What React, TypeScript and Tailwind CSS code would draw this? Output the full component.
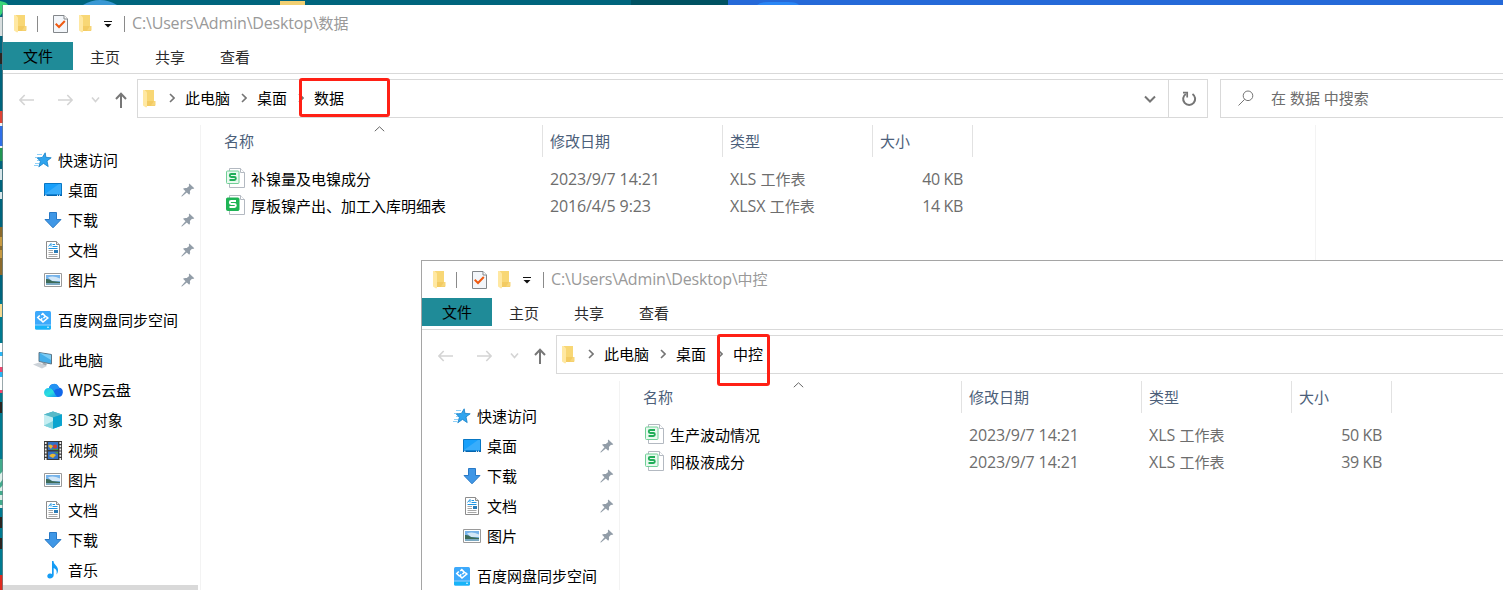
import React from "react";

type NavItem = {
  label: string;
  latin?: string;
  icon: React.ReactNode;
  child?: boolean;
  pinned?: boolean;
  gapBefore?: boolean;
};

type FileItem = {
  name: string;
  date: string;
  type: string;
  size: string;
  filled?: boolean;
};

function FolderIcon() {
  return (
    <svg width="13" height="18" viewBox="0 0 13 18" className="shrink-0">
      <path d="M2 0H11V12H12V16H3Z" fill="#f3cb62" />
      <path d="M3 0H11V11H3Z" fill="#f8d775" />
      <path d="M0 0H2L4 2.5V17L3 17.5L0 15.5Z" fill="#ffe8a2" />
      <path d="M11 11h1.5V15.5H8Z" fill="#f7d679" />
    </svg>
  );
}

function CheckDocIcon() {
  return (
    <svg width="15" height="18" viewBox="0 0 15 18" className="shrink-0">
      <path d="M.5.5H11L14.5 4V17.5H.5Z" fill="#f3f6fa" stroke="#83878b" />
      <path d="M11 .5V4H14.5" fill="#fff" stroke="#83878b" />
      <path d="M2.7 8.8 6 12 11.8 6" fill="none" stroke="#ef5a12" strokeWidth="2" />
    </svg>
  );
}

function StarIcon() {
  return (
    <svg width="18" height="16" viewBox="0 0 18 16" className="shrink-0">
      <path d="M3 2.5H8M1 5.5H5M3 8.5H6M1 11.5H5M0 13.5H4" stroke="#8fd0f7" />
      <path
        d="M11.2.8 11.9 5.3 17.2 5.8 13 8.9 14.2 14.6 9.5 11.4 4.8 14.8 6.4 9.2 3.3 6 8.4 5.4Z"
        fill="#2fa4ee"
        stroke="#1480c8"
        strokeWidth=".8"
      />
    </svg>
  );
}

function DesktopIcon() {
  return (
    <svg width="18" height="14" viewBox="0 0 18 14" className="shrink-0">
      <path d="M.5.5H17.5V12.5H.5Z" fill="#18a0fb" stroke="#0877c4" />
      <path d="M1 11 15 1H17V11Z" fill="#39adfb" />
      <path d="M0 11.5H18V13H0Z" fill="#0664ad" />
      <path d="M1 12.3H2.5M13 12.3h1M15 12.3h1" stroke="#fff" />
    </svg>
  );
}

function DownloadIcon() {
  return (
    <svg width="18" height="18" viewBox="0 0 18 18" className="shrink-0">
      <path d="M5.5 1.5H12.5V8.5H17L9 16.8 1 8.5H5.5Z" fill="#3f97e6" stroke="#2879c6" />
    </svg>
  );
}

function DocumentIcon() {
  return (
    <svg width="18" height="18" viewBox="0 0 18 18" className="shrink-0">
      <path d="M2.5.5H12.5L15.5 3.5V17.5H2.5Z" fill="#fff" stroke="#8c8c8c" />
      <path d="M12.5.5V3.5H15.5" fill="#e8e8e8" stroke="#8c8c8c" />
      <path d="M4.5 5.5 7 2.5V5.5M8.5 3.5H11M8.5 5.5H13.5M4.5 7.5H13.5" stroke="#2196e3" fill="none" />
      <path d="M4.5 9.5H9M4.5 11.5H9M4.5 13.5H13.5M4.5 15.5H13.5" stroke="#a8a8a8" />
      <path d="M10 9H14V12H10Z" fill="#2b7cb8" />
    </svg>
  );
}

function PictureIcon() {
  return (
    <svg width="18" height="14" viewBox="0 0 18 14" className="shrink-0">
      <path d="M.5.5H17.5V13.5H.5Z" fill="#fff" stroke="#9a9a9a" />
      <path d="M2 2H16V12H2Z" fill="#76b3ea" />
      <path d="M4 4.5Q9 2 16 5.5V8H8Z" fill="#d2e7f8" />
      <path d="M2 6Q5 5.5 8 8L16 9V10H2Z" fill="#3d6b58" />
      <path d="M2 10H16V12H2Z" fill="#7ba9c2" />
    </svg>
  );
}

function BaiduIcon() {
  return (
    <svg width="16" height="19" viewBox="0 0 16 19" className="shrink-0">
      <rect width="16" height="18.5" rx="1.5" fill="#3da9fb" />
      <path d="M0 14.5H16V17a1.5 1.5 0 0 1-1.5 1.5H1.5A1.5 1.5 0 0 1 0 17Z" fill="#18b4f8" />
      <path d="M0 14H16" stroke="#a7ddff" strokeWidth=".8" />
      <path
        d="M4.8 4.5 2.8 6.5 5.3 9M6.3 4 7.8 2.7 10.3 5.2 8.4 7.2M11.2 5.5 12.8 7 8 11 5.8 8.9 7.3 7.2"
        fill="none"
        stroke="#fff"
        strokeWidth="1.6"
      />
      <circle cx="13" cy="16.3" r=".8" fill="#fff" />
    </svg>
  );
}

function ComputerIcon() {
  return (
    <svg width="20" height="18" viewBox="0 0 20 18" className="shrink-0">
      <path d="M6 1.5 18.5 3.5V13L6 10.5Z" fill="#44aeea" stroke="#5e7686" />
      <path d="M6.5 2 18 4V9Z" fill="#7cccf5" />
      <path d="M10 11.5 14 12.5 13 15 9 14Z" fill="#9fa7ad" />
      <path d="M0 13.5 6 11.5 14 15 9 17.5Z" fill="#ccd2d8" />
    </svg>
  );
}

function CloudIcon() {
  return (
    <svg width="19" height="14" viewBox="0 0 19 14" className="shrink-0">
      <defs>
        <linearGradient id="cloudFront" x1="0" y1="0" x2="1" y2="1">
          <stop offset="0" stopColor="#1fbdf0" />
          <stop offset=".5" stopColor="#2be0dc" />
          <stop offset="1" stopColor="#1389f5" />
        </linearGradient>
      </defs>
      <path d="M5 5A5.2 5.2 0 0 1 15 4.5 4.8 4.8 0 0 1 14 14H7Z" fill="#1268ea" />
      <path d="M5 5A5.2 5.2 0 0 1 13 1.6Q15 4 15 6 12 5 10 8 8.5 5 5 5Z" fill="#2393f3" />
      <path d="M4.5 14A4.5 4.5 0 0 1 4.6 5C8 4.8 9 7 10 9S12 13.5 14 14Z" fill="url(#cloudFront)" />
    </svg>
  );
}

function CubeIcon() {
  return (
    <svg width="18" height="18" viewBox="0 0 18 18" className="shrink-0">
      <path d="M0 3.5 9 .5 18 3.5V14.5L9 17.8 0 14.5Z" fill="#25a9c4" />
      <path d="M0 3.5 9 .5 18 3.5 9 6.5Z" fill="#57b9c8" />
      <path d="M0 3.5 9 6.5V17.8L0 14.5Z" fill="#c5eef2" />
      <path d="M0 14.5 9 10V17.8Z" fill="#7ed2db" />
      <path d="M9 6.5 18 3.5V14.5L9 17.8Z" fill="#0ba4cf" />
    </svg>
  );
}

function VideoIcon() {
  return (
    <svg width="18" height="19" viewBox="0 0 18 19" className="shrink-0">
      <path d="M0 0H18V19H0Z" fill="#3a3a3a" />
      <path d="M1.7 1V19M16.3 1V19" stroke="#f0f0f0" strokeWidth="1.7" strokeDasharray="2 1.2" />
      <path d="M4 1H14V9H4ZM4 10.5H14V18H4Z" fill="#3271c8" />
      <path d="M4 5Q6 2 9 5L7 8ZM5 15Q8 11 12 14L9 17Z" fill="#e7b934" />
      <circle cx="11" cy="5.5" r="2" fill="#d33f2c" />
      <path d="M8 8H14V9H8ZM10 11H14V13Z" fill="#4a9b43" />
    </svg>
  );
}

function MusicIcon() {
  return (
    <svg width="18" height="18" viewBox="0 0 18 18" className="shrink-0">
      <path
        d="M8 0H9.5C9.5 4 14.5 5 14 9.5 14 11 13.3 12.5 12.5 13.5 13.3 9.5 12 8 9.7 7V14C9.7 16 8 17.5 5.8 17.5 2.5 17.5 2.5 13 5.8 12.6Q7 12.3 8 13Z"
        fill="#149cf5"
      />
    </svg>
  );
}

function PinIcon() {
  return (
    <svg width="14" height="14" viewBox="0 0 14 14" className="shrink-0">
      <path
        d="M8.3.5 13.3 5.3 12 6 11 5.8 8.9 8.1C9.4 9.8 9 10.8 8.2 11.7L5.8 9.4 1 13.5.2 13.3 4.5 8.2 2 5.8C3 5 4.2 4.8 5.8 5.1L8.2 3 7.8 1.8Z"
        fill="#929da8"
      />
    </svg>
  );
}

function SheetIcon({ filled }: { filled?: boolean }) {
  return (
    <svg width="19" height="20" viewBox="0 0 19 20" className="shrink-0">
      <path d="M3.5.5H14.5L18.5 4.5V19.5H3.5Z" fill="#fff" stroke="#b3b9c1" />
      <path d="M14.5.5V4.5H18.5" fill="#fff" stroke="#b3b9c1" />
      <rect
        x=".5"
        y="3"
        width="12.5"
        height="12.5"
        rx="1"
        fill={filled ? "#1eb455" : "#e9f9ef"}
        stroke={filled ? "#1eb455" : "#71cf97"}
      />
      <path
        d="M10 6H5.2Q3.8 6 3.8 7.5T5.2 9H8.4Q9.8 9 9.8 10.5T8.4 12H3.5"
        fill="none"
        stroke={filled ? "#fff" : "#20ae58"}
        strokeWidth="1.9"
      />
    </svg>
  );
}

function Crumb() {
  return (
    <svg width="6" height="10" viewBox="0 0 6 10" className="shrink-0">
      <path d="M1 1 5 5 1 9" fill="none" stroke="#757575" strokeWidth="1.6" />
    </svg>
  );
}

const quickAccess: NavItem[] = [
  { label: "快速访问", icon: <StarIcon /> },
  { label: "桌面", icon: <DesktopIcon />, child: true, pinned: true },
  { label: "下载", icon: <DownloadIcon />, child: true, pinned: true },
  { label: "文档", icon: <DocumentIcon />, child: true, pinned: true },
  { label: "图片", icon: <PictureIcon />, child: true, pinned: true },
  { label: "百度网盘同步空间", icon: <BaiduIcon />, gapBefore: true },
];

const thisPc: NavItem[] = [
  { label: "此电脑", icon: <ComputerIcon />, gapBefore: true },
  { latin: "WPS", label: "云盘", icon: <CloudIcon />, child: true },
  { latin: "3D ", label: "对象", icon: <CubeIcon />, child: true },
  { label: "视频", icon: <VideoIcon />, child: true },
  { label: "图片", icon: <PictureIcon />, child: true },
  { label: "文档", icon: <DocumentIcon />, child: true },
  { label: "下载", icon: <DownloadIcon />, child: true },
  { label: "音乐", icon: <MusicIcon />, child: true },
];

const dataFiles: FileItem[] = [
  { name: "补镍量及电镍成分", date: "2023/9/7 14:21", type: "XLS", size: "40 KB" },
  { name: "厚板镍产出、加工入库明细表", date: "2016/4/5 9:23", type: "XLSX", size: "14 KB", filled: true },
];

const controlFiles: FileItem[] = [
  { name: "生产波动情况", date: "2023/9/7 14:21", type: "XLS", size: "50 KB" },
  { name: "阳极液成分", date: "2023/9/7 14:21", type: "XLS", size: "39 KB" },
];

function TitleBar({ folder }: { folder: string }) {
  return (
    <div className="flex h-[37px] items-center pl-[11px]">
      <FolderIcon />
      <div className="ml-[10px] h-4 w-px bg-[#8a8a8a]" />
      <div className="ml-[15px] flex">
        <CheckDocIcon />
      </div>
      <div className="ml-[11px] flex">
        <FolderIcon />
      </div>
      <svg width="8" height="7" viewBox="0 0 8 7" className="ml-[12px] mt-[2px]">
        <path d="M0 .5H8" stroke="#111" />
        <path d="M.5 3H7.5L4 6.5Z" fill="#111" />
      </svg>
      <div className="ml-[12px] h-4 w-px bg-[#8a8a8a]" />
      <div className="ml-[7px] pb-[2px] text-[#999999]">
        <span className="text-base leading-5 tracking-[-0.17px]">C:\Users\Admin\Desktop\</span>
        {folder}
      </div>
    </div>
  );
}

function Ribbon() {
  return (
    <div className="flex h-8 border-b border-[#d9d9d9] text-[#2b2b2b]">
      <div className="flex h-7 w-[70px] items-center justify-center bg-[#1f8b98] text-black">文件</div>
      <div className="flex h-[30px] w-[64px] items-center justify-center">主页</div>
      <div className="flex h-[30px] w-[66px] items-center justify-center">共享</div>
      <div className="flex h-[30px] w-[64px] items-center justify-center">查看</div>
    </div>
  );
}

function AddressBar({ folder, search }: { folder: string; search?: boolean }) {
  return (
    <div className="flex h-[51px] pt-[5px]">
      <div className="flex h-[39px] w-[134px] shrink-0 items-center pl-[16px] pt-[2px]">
        <svg width="110" height="18" viewBox="0 0 110 18" fill="none">
          <path d="M15 9H.5M5.7 4 .9 9 5.7 14M39 9H53.5M48.3 4 53.1 9 48.3 14" stroke="#d4d4d4" strokeWidth="1.6" />
          <path d="M73 6.5 76.5 10.5 80 6.5" stroke="#d4d4d4" strokeWidth="1.6" />
          <path d="M102 17V3M97 8 102 2.8 107 8" stroke="#777" strokeWidth="2" />
        </svg>
      </div>
      <div className="flex h-[39px] w-[1071px] shrink-0 items-center border border-[#d9d9d9]">
        <div className="ml-[5px] flex">
          <FolderIcon />
        </div>
        <div className="ml-[12.5px] flex items-center gap-[10.5px] pb-[2px]">
          <Crumb />
          <span>此电脑</span>
          <Crumb />
          <span>桌面</span>
          <Crumb />
          <span>{folder}</span>
        </div>
        <svg width="12" height="8" viewBox="0 0 12 8" className="ml-auto mr-3">
          <path d="M1 1.5 6 6.5 11 1.5" fill="none" stroke="#757575" strokeWidth="2" />
        </svg>
        <div className="flex h-full w-[39px] items-center justify-center border-l border-[#d9d9d9] pl-px">
          <svg width="16" height="16" viewBox="0 0 16 16" fill="none" stroke="#757575">
            <path d="M11.5 3A6 6 0 1 1 4.8 3" strokeWidth="2" />
            <path d="M2 1.7H6.2V6.5" strokeWidth="1.7" />
          </svg>
        </div>
      </div>
      {search && (
        <div className="ml-3 flex h-[39px] w-[400px] shrink-0 items-center border border-[#d9d9d9] pb-[2px] pl-[17px] text-[#6d6d6d]">
          <svg width="16" height="16" viewBox="0 0 16 16" fill="none" stroke="#757575">
            <circle cx="10" cy="5.8" r="4.8" />
            <path d="M6.7 9.3.5 15.5" />
          </svg>
          <span className="ml-[17px]">在 {folder} 中搜索</span>
        </div>
      )}
    </div>
  );
}

function NavPane({ items }: { items: NavItem[] }) {
  return (
    <div className="flex h-full w-[198px] shrink-0 flex-col border-r border-[#f3f3f3] pt-5">
      {items.map((item, i) => (
        <div
          key={i}
          className={`flex h-[30px] shrink-0 items-center pr-[5px] ${item.child ? "pl-[40px]" : "pl-[31px]"} ${
            item.gapBefore ? "mt-[10px]" : ""
          }`}
        >
          <div className={`flex shrink-0 justify-center ${item.child ? "w-5" : "w-[18px]"}`}>{item.icon}</div>
          <span className={`whitespace-pre ${item.child ? "ml-[5px]" : "ml-[6px]"}`}>
            {item.latin && <span className="text-base leading-5 tracking-[-0.1px]">{item.latin}</span>}
            {item.label}
          </span>
          {item.pinned && (
            <div className="ml-auto">
              <PinIcon />
            </div>
          )}
        </div>
      ))}
    </div>
  );
}

function FileList({ files }: { files: FileItem[] }) {
  return (
    <div className="w-[1115px] shrink-0 border-r border-[#f3f3f3]">
      <div className="relative flex h-8 items-center text-[#4c607a]">
        <svg width="11" height="6" viewBox="0 0 11 6" className="absolute left-[173px] top-px">
          <path d="M.8 5.2 5.5.8 10.2 5.2" fill="none" stroke="#666" />
        </svg>
        <div className="flex h-full w-[342px] items-center border-r border-[#e2e2e2] pl-[23px]">名称</div>
        <div className="flex h-full w-[180px] items-center border-r border-[#e2e2e2] pl-[7px]">修改日期</div>
        <div className="flex h-full w-[150px] items-center border-r border-[#e2e2e2] pl-[7px]">类型</div>
        <div className="flex h-full w-[100px] items-center border-r border-[#e2e2e2] pl-[7px]">大小</div>
      </div>
      <div className="pt-2">
        {files.map((file) => (
          <div key={file.name} className="flex h-[27px] items-center text-[#6d6d6d]">
            <div className="flex w-[349px] items-center pl-[25px] text-black">
              <div className="flex pb-[2px]">
                <SheetIcon filled={file.filled} />
              </div>
              <span className="ml-[6px]">{file.name}</span>
            </div>
            <div className="w-[180px] text-base leading-5 tracking-[-0.13px]">{file.date}</div>
            <div className="w-[130px]">
              <span className="text-base leading-5">{file.type} </span>工作表
            </div>
            <div className="w-[103px] text-right text-base leading-5 tracking-[-0.35px]">{file.size}</div>
          </div>
        ))}
      </div>
    </div>
  );
}

type ExplorerProps = {
  folder: string;
  files: FileItem[];
  nav: NavItem[];
  search?: boolean;
};

function ExplorerWindow({ folder, files, nav, search }: ExplorerProps) {
  return (
    <div className="flex h-full w-[1700px] flex-col bg-white">
      <TitleBar folder={folder} />
      <Ribbon />
      <AddressBar folder={folder} search={search} />
      <div className="flex min-h-0 flex-1 overflow-hidden">
        <NavPane items={nav} />
        <FileList files={files} />
      </div>
    </div>
  );
}

// Desktop strip that stays visible above and to the left of the windows
function Wallpaper() {
  return (
    <svg width="1503" height="590" viewBox="0 0 1503 590" className="absolute left-0 top-0">
      <path d="M0 0H631V590H0Z" fill="#00657d" />
      <path d="M0 300H3V590H0Z" fill="#007a90" />
      <path d="M631 0H728V5H631Z" fill="#005262" />
      <path d="M728 0H1503V5H728Z" fill="#2569d8" />
      <path d="M757 5Q760 2 768 2H788Q797 2 799 5Z" fill="#2a86f5" />
      <path d="M83 5Q100-5 117 5Z" fill="#3998d4" />
      <path d="M280 1H305V5H280Z" fill="#f1cf72" />
      <path d="M0 1Q7 2 8 5H3V12L0 16Z" fill="#3ad57a" />
      <path d="M0 17H3V36H0Z" fill="#d8dedf" />
      <path d="M0 53H2V64H0Z" fill="#2b2420" />
      <path d="M0 111H3V123H0Z" fill="#e04335" />
      <path d="M0 126H3V146H0Z" fill="#2f6fe8" />
      <path d="M0 123H3V126H0ZM0 146H3V148H0Z" fill="#f4f4f4" />
      <path d="M0 148H3V161H0Z" fill="#219653" />
      <path d="M0 169H2V180H0ZM0 192H2V199H0Z" fill="#d8e6ea" />
      <path d="M0 227H3V275H0Z" fill="#8b6a2c" />
      <path d="M0 237H2V246H0ZM0 250H2V258H0Z" fill="#c79a42" />
      <path d="M0 304H2V317H0Z" fill="#f6d98f" />
      <path d="M0 343H3V392H0Z" fill="#fff" />
      <path d="M0 352H3V356H0ZM0 372H3V377H0Z" fill="#29b6f6" />
      <path d="M0 367H3V372H0ZM0 390H3V393H0Z" fill="#ef476f" />
      <path d="M0 402H2V413H0ZM0 517H2V528H0ZM0 538H2V549H0Z" fill="#2b2420" />
      <path d="M0 459H3V508H0Z" fill="#dff0ea" />
      <path d="M0 459H3V471L0 474ZM0 483 3 479V485L0 488ZM0 491H3V495H0ZM0 500H3V505H0Z" fill="#42ab8c" />
      <path d="M0 575H3V590H0Z" fill="#df2b20" />
      <path d="M2.5 5V590" stroke="#6d8288" strokeWidth=".7" />
    </svg>
  );
}

export default function App() {
  return (
    <div className="relative h-[590px] w-[1503px] overflow-hidden font-['Open_Sans','Noto_Sans_CJK_SC',sans-serif] text-[15px] leading-5 text-black">
      <Wallpaper />
      <div className="absolute left-[3px] top-[5px] h-[585px] w-[1500px] overflow-hidden">
        <ExplorerWindow folder="数据" files={dataFiles} nav={[...quickAccess, ...thisPc]} search />
        <div className="absolute bottom-0 left-0 h-[5px] w-[195px] bg-[#d9d9d9]" />
        <div className="absolute left-[296px] top-[73px] h-[39px] w-[91px] rounded-[3px] border-3 border-[#ff2015]" />
      </div>
      <div className="absolute left-[421px] top-[260px] h-[330px] w-[1082px] overflow-hidden border-l border-t border-[#a5a5a5]">
        <ExplorerWindow folder="中控" files={controlFiles} nav={quickAccess} />
        <div className="absolute left-[295px] top-[73px] h-[52px] w-[53px] rounded-[3px] border-3 border-[#ff2015]" />
      </div>
    </div>
  );
}
